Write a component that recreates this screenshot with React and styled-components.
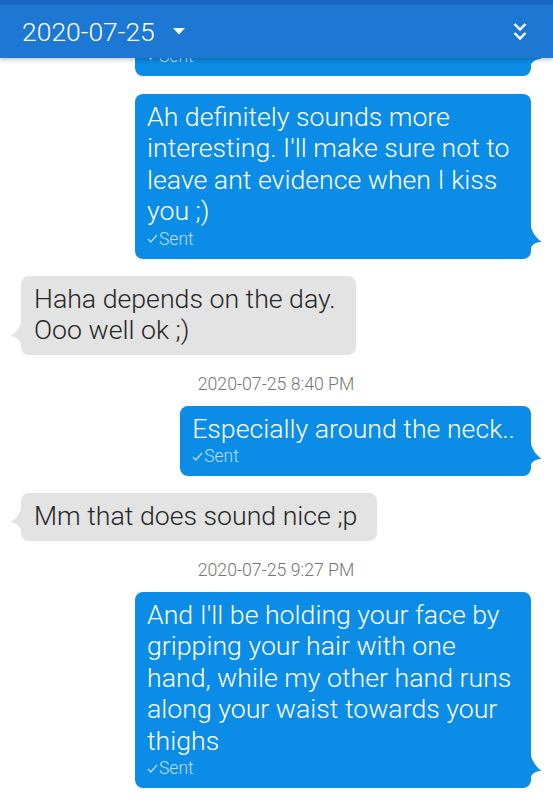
import React from 'react';
import styled, { createGlobalStyle } from 'styled-components';

const Global = createGlobalStyle`
	html, body {
		margin: 0;
		padding: 0;
		background: #fff;
	}
	body {
		font-family: Roboto, 'Noto Sans', 'Liberation Sans', sans-serif;
	}
`;

const Screen = styled.div`
	position: relative;
	width: 553px;
	height: 800px;
	overflow: hidden;
	background: #fff;
`;

const Header = styled.header`
	position: absolute;
	top: 0;
	left: 0;
	right: 0;
	height: 58px;
	background: #1c78d3;
	border-top: 5px solid #1869c4;
	box-sizing: border-box;
	box-shadow: 0 2px 4px rgba(0, 0, 0, 0.22);
	display: flex;
	align-items: center;
	justify-content: space-between;
	padding: 0 26px 0 22px;
	z-index: 2;

	.date-picker {
		display: flex;
		align-items: center;
		gap: 18px;
		color: #fff;
		font-size: 26.5px;
		font-weight: 300;
	}
`;

const Thread = styled.div`
	height: 800px;
	display: flex;
	flex-direction: column;
	justify-content: flex-end;
	padding: 0 22px 12px 21px;
	box-sizing: border-box;
`;

const Row = styled.div`
	display: flex;
	justify-content: ${(props) => (props.$out ? 'flex-end' : 'flex-start')};
	margin-top: ${(props) => props.$gap ?? 17}px;
`;

const Bubble = styled.div`
	position: relative;
	max-width: 396px;
	${(props) => props.$full && 'width: 396px;'}
	box-sizing: border-box;
	padding: ${(props) => (props.$out ? '8px 16px 9px 12px' : '8px 20px 8px 13px')};
	border-radius: 8px;
	background: ${(props) => (props.$out ? '#0b8ce6' : '#e3e3e3')};
	color: ${(props) => (props.$out ? '#fff' : '#262626')};
	font-size: 26.7px;
	font-weight: 300;
	line-height: 31.5px;
	white-space: pre-line;

	.tail {
		position: absolute;
		bottom: ${(props) => (props.$out ? 10 : 9)}px;
		${(props) => (props.$out ? 'right: -11px;' : 'left: -11px;')}
	}
`;

const Status = styled.div`
	display: flex;
	align-items: center;
	gap: 1px;
	height: 22px;
	font-size: 17.5px;
	line-height: 22px;
	color: rgba(255, 255, 255, 0.72);
`;

const Stamp = styled.div`
	text-align: center;
	font-size: 17.7px;
	font-weight: 300;
	line-height: 20px;
	color: #757575;
	margin: 19px 0 12px;
`;

const Tail = ({ out }) =>
	out ? (
		<svg className='tail' width='12' height='26' viewBox='0 0 12 26'>
			<path d='M0 0 C1.5 8 5 14 11.5 19 C6 19 2 21.5 0 26 Z' fill='#0b8ce6' />
		</svg>
	) : (
		<svg className='tail' width='12' height='27' viewBox='0 0 12 27'>
			<path d='M12 0 C10.5 8 7 13 0.5 17 C6 17.5 10 21.5 12 27 Z' fill='#e3e3e3' />
		</svg>
	);

const Check = () => (
	<svg width='11' height='9' viewBox='0 0 11 9'>
		<path d='M1 5 L3.8 8 L10 1' fill='none' stroke='rgba(255,255,255,0.72)' strokeWidth='1.2' />
	</svg>
);

const Message = ({ out, full, text, gap }) => (
	<Row $out={out} $gap={gap}>
		<Bubble $out={out} $full={full}>
			{text}
			{out && (
				<Status>
					<Check />
					Sent
				</Status>
			)}
			<Tail out={out} />
		</Bubble>
	</Row>
);

const App = () => {
	return (
		<Screen>
			<Global />
			<Header>
				<div className='date-picker'>
					<span>2020-07-25</span>
					<svg width='12' height='7' viewBox='0 0 12 7'>
						<path d='M0 0 H12 L6 6.5 Z' fill='#fff' />
					</svg>
				</div>
				<svg width='14' height='20' viewBox='0 0 14 20'>
					<path
						d='M1.5 2 L7 7.5 L12.5 2 M1.5 11 L7 16.5 L12.5 11'
						fill='none'
						stroke='#fff'
						strokeWidth='2.4'
					/>
				</svg>
			</Header>
			<Thread>
				<Message out full text={'I was thinking more like a little\nbite, nothing too bad'} />
				<Message
					out
					full
					gap={18}
					text={"Ah definitely sounds more\ninteresting. I'll make sure not to\nleave ant evidence when I kiss\nyou ;)"}
				/>
				<Message text={'Haha depends on the day.\nOoo well ok ;)'} />
				<Stamp>2020-07-25 8:40 PM</Stamp>
				<Message out gap={0} text='Especially around the neck..' />
				<Message text='Mm that does sound nice ;p' />
				<Stamp>2020-07-25 9:27 PM</Stamp>
				<Message
					out
					full
					gap={0}
					text={"And I'll be holding your face by\ngripping your hair with one\nhand, while my other hand runs\nalong your waist towards your\nthighs"}
				/>
			</Thread>
		</Screen>
	);
};

export default App;
